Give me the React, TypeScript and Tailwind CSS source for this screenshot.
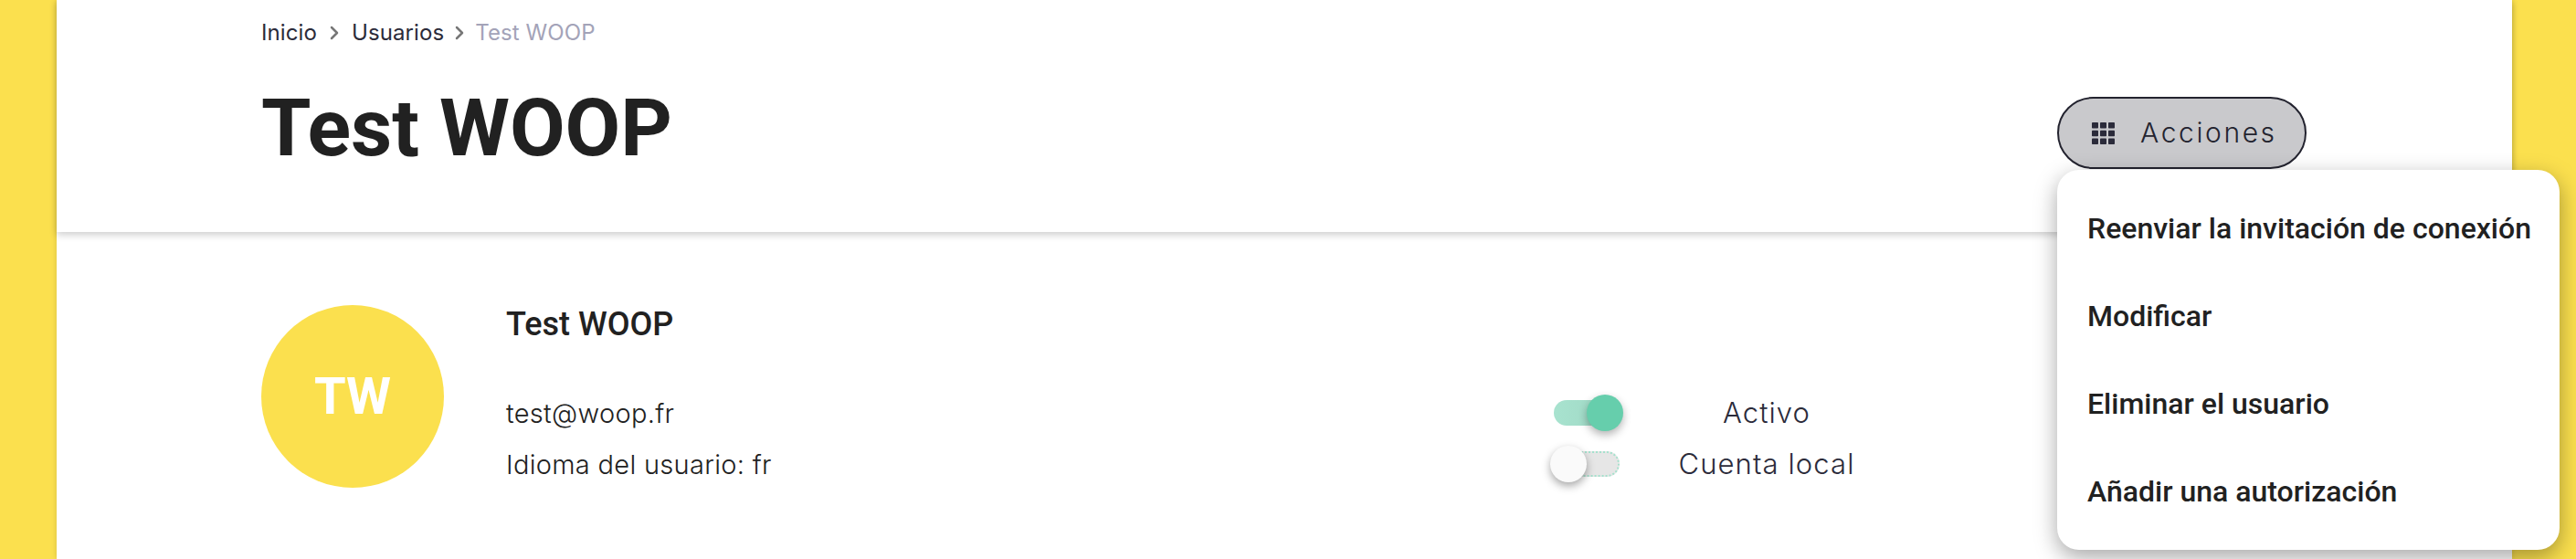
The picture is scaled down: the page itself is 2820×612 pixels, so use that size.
import { ChevronRight } from "lucide-react"

const menuItems = [
  "Reenviar la invitación de conexión",
  "Modificar",
  "Eliminar el usuario",
  "Añadir una autorización",
]

function GridIcon() {
  return (
    <svg width="25" height="24" viewBox="0 0 25 24" fill="#2b2b3a">
      <rect x="0" y="0" width="7" height="6.5" rx="0.8" />
      <rect x="9" y="0" width="7" height="6.5" rx="0.8" />
      <rect x="18" y="0" width="7" height="6.5" rx="0.8" />
      <rect x="0" y="8.75" width="7" height="6.5" rx="0.8" />
      <rect x="9" y="8.75" width="7" height="6.5" rx="0.8" />
      <rect x="18" y="8.75" width="7" height="6.5" rx="0.8" />
      <rect x="0" y="17.5" width="7" height="6.5" rx="0.8" />
      <rect x="9" y="17.5" width="7" height="6.5" rx="0.8" />
      <rect x="18" y="17.5" width="7" height="6.5" rx="0.8" />
    </svg>
  )
}

function Toggle({ on }: { on: boolean }) {
  return (
    <div className="relative h-[28px] w-[72px]">
      {on ? (
        <>
          <div className="h-full w-[60px] rounded-l-full bg-gradient-to-r from-[#a8e3cf] to-[#a0d8c5]" />
          <div className="absolute right-[-4px] top-[-6px] size-[40px] rounded-full bg-[#66ceac] shadow-[0_4px_10px_rgba(0,0,0,0.3)]" />
        </>
      ) : (
        <>
          <div className="h-full w-full rounded-full border-2 border-dotted border-[#a6e1cd] bg-[#e6e6e6]" />
          <div className="absolute left-[-4px] top-[-6px] size-[40px] rounded-full bg-[#fafafa] shadow-[0_4px_10px_rgba(0,0,0,0.35)]" />
        </>
      )}
    </div>
  )
}

export default function App() {
  return (
    <div className="relative h-[612px] w-[2820px] overflow-hidden bg-[#fbe04e] font-['Inter',sans-serif]">
      <div className="ml-[62px] mr-[70px] h-full bg-white shadow-[0_0_6px_rgba(0,0,0,0.15)]">
        {/* Header */}
        <div className="h-[254px] pl-[224px] pr-[225px] pt-[20px] shadow-[0_3px_8px_rgba(0,0,0,0.2)]">
          <div className="flex h-[32px] items-center text-[24px] tracking-[0.1px] text-[#2b2b3a]">
            <span>Inicio</span>
            <ChevronRight className="mx-[7px] size-[24px] text-[#777]" strokeWidth={2.5} />
            <span>Usuarios</span>
            <ChevronRight className="mx-[5px] size-[24px] text-[#777]" strokeWidth={2.5} />
            <span className="text-[#a3a3b8]">Test WOOP</span>
          </div>
          <div className="flex items-start justify-between">
            <h1 className="mt-[44px] font-['Roboto',sans-serif] text-[88px] font-bold leading-none text-[#212121]">
              Test WOOP
            </h1>
            <button className="mt-[54px] flex h-[79px] w-[273px] items-center gap-[28px] rounded-full border-2 border-[#23232f] bg-[#c9c9cc] pl-[36px] text-[30px] font-light tracking-[2.6px] text-[#23232f]">
              <GridIcon />
              Acciones
            </button>
          </div>
        </div>

        {/* User details */}
        <div className="flex pl-[224px] pr-[225px] pt-[80px]">
          <div className="flex size-[200px] items-center justify-center rounded-full bg-[#fbe04e] font-['Roboto',sans-serif] text-[56px] font-bold text-white">
            TW
          </div>
          <div className="ml-[68px] w-[1147px]">
            <div className="font-['Roboto',sans-serif] text-[36px] font-medium leading-[42px] text-[#212121]">
              Test WOOP
            </div>
            <div className="mt-[49px] text-[29px] font-light leading-[56px] tracking-[0.3px] text-[#212121]">test@woop.fr</div>
            <div className="text-[29px] font-light leading-[56px] tracking-[0.3px] text-[#212121]">Idioma del usuario: fr</div>
          </div>
          <div className="mt-[104px] flex flex-col gap-[28px]">
            <div className="flex items-center">
              <Toggle on />
              <span className="ml-[41px] w-[240px] text-center text-[31px] font-light leading-[28px] tracking-[1.1px] text-[#2b2b3a]">Activo</span>
            </div>
            <div className="flex items-center">
              <Toggle on={false} />
              <span className="ml-[41px] w-[240px] text-center text-[31px] font-light leading-[28px] tracking-[1.1px] text-[#2b2b3a]">Cuenta local</span>
            </div>
          </div>
        </div>
      </div>

      {/* Actions menu */}
      <div className="absolute left-[2252px] top-[186px] flex h-[416px] w-[550px] flex-col justify-center rounded-[24px] bg-white px-[33px] font-['Roboto',sans-serif] shadow-[0_8px_24px_rgba(0,0,0,0.35)]">
        {menuItems.map((item) => (
          <div key={item} className="flex h-[96px] items-center whitespace-nowrap text-[32px] font-medium text-[#212121]">
            {item}
          </div>
        ))}
      </div>
    </div>
  )
}
